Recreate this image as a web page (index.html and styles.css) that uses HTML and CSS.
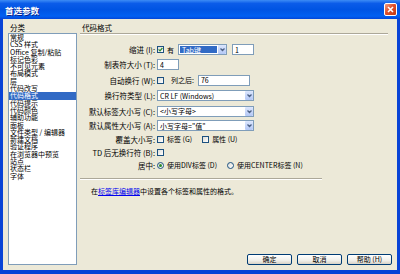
FILE: index.html
```html
<!DOCTYPE html>
<html lang="zh-CN">
<head>
  <meta charset="UTF-8">
  <meta name="viewport" content="width=device-width, initial-scale=1.0">
  <title>首选参数</title>
  <link rel="stylesheet" href="styles.css">
</head>
<body>
  <div class="window">
    <div class="titlebar">
      <span class="title">首选参数</span>
      <span class="close">
        <svg width="7" height="7" viewBox="0 0 7 7"><path d="M1 1 L6 6 M6 1 L1 6" stroke="#fff" stroke-width="1.6"/></svg>
      </span>
    </div>

    <div class="body">
      <div class="sidebar">
        <div class="caption">分类</div>
        <ul class="list">
          <li>常规</li>
          <li>CSS 样式</li>
          <li>Office 复制/粘贴</li>
          <li>标记色彩</li>
          <li>不可见元素</li>
          <li>布局模式</li>
          <li>层</li>
          <li>代码改写</li>
          <li class="selected">代码格式</li>
          <li>代码提示</li>
          <li>代码颜色</li>
          <li>辅助功能</li>
          <li>面板</li>
          <li>文件类型 / 编辑器</li>
          <li>新建文档</li>
          <li>验证程序</li>
          <li>在浏览器中预览</li>
          <li>站点</li>
          <li>状态栏</li>
          <li>字体</li>
        </ul>
      </div>

      <div class="main">
        <div class="heading">代码格式</div>

        <div class="form">
          <label class="label">缩进 (I):</label>
          <div class="controls">
            <span class="check on"><svg width="5" height="5" viewBox="0 0 5 5"><path d="M0.6 2.4 L2 3.8 L4.4 1" stroke="#2a8a2a" stroke-width="1.2" fill="none"/></svg></span>
            <span class="text">有</span>
            <span class="select w49 active"><span class="value">Tab键</span><span class="arrow"><svg width="7" height="7" viewBox="0 0 7 7"><path d="M1.5 2.5 L3.5 4.5 L5.5 2.5" stroke="#4d6185" stroke-width="1.3" fill="none"/></svg></span></span>
            <span class="input w22 gap-left">1</span>
          </div>

          <label class="label">制表符大小 (T):</label>
          <div class="controls">
            <span class="input w22">4</span>
          </div>

          <label class="label">自动换行 (W):</label>
          <div class="controls">
            <span class="check"></span>
            <span class="text pad-left">列之后:</span>
            <span class="input w52">76</span>
          </div>

          <label class="label">换行符类型 (L):</label>
          <div class="controls">
            <span class="select w97"><span class="value">CR LF (Windows)</span><span class="arrow"><svg width="7" height="7" viewBox="0 0 7 7"><path d="M1.5 2.5 L3.5 4.5 L5.5 2.5" stroke="#4d6185" stroke-width="1.3" fill="none"/></svg></span></span>
          </div>

          <label class="label">默认标签大小写 (C):</label>
          <div class="controls">
            <span class="select w97"><span class="value">&lt;小写字母&gt;</span><span class="arrow"><svg width="7" height="7" viewBox="0 0 7 7"><path d="M1.5 2.5 L3.5 4.5 L5.5 2.5" stroke="#4d6185" stroke-width="1.3" fill="none"/></svg></span></span>
          </div>

          <label class="label">默认属性大小写 (A):</label>
          <div class="controls">
            <span class="select w97"><span class="value">小写字母="值"</span><span class="arrow"><svg width="7" height="7" viewBox="0 0 7 7"><path d="M1.5 2.5 L3.5 4.5 L5.5 2.5" stroke="#4d6185" stroke-width="1.3" fill="none"/></svg></span></span>
          </div>

          <label class="label">覆盖大小写:</label>
          <div class="controls">
            <span class="check"></span>
            <span class="text opt">标签 (G)</span>
            <span class="check"></span>
            <span class="text">属性 (U)</span>
          </div>

          <label class="label">TD 后无换行符 (B):</label>
          <div class="controls">
            <span class="check"></span>
          </div>

          <label class="label">居中:</label>
          <div class="controls">
            <span class="radio on"></span>
            <span class="text opt">使用DIV标签 (D)</span>
            <span class="radio"></span>
            <span class="text">使用CENTER标签 (N)</span>
          </div>
        </div>

        <div class="rule"></div>

        <p class="note">在<a href="#">标签库编辑器</a>中设置各个标签和属性的格式。</p>

        <div class="buttons">
          <button>确定</button>
          <button>取消</button>
          <button>帮助 (H)</button>
        </div>
      </div>
    </div>
  </div>
</body>
</html>
```

FILE: styles.css
```css
body {
  margin: 0;
  padding: 0;
  font-family: "Noto Sans CJK SC", "Noto Sans", sans-serif;
  color: #000;
}

.window {
  width: 400px;
  height: 274px;
  display: flex;
  flex-direction: column;
  background: #0843d6;
  overflow: hidden;
}

.titlebar {
  height: 19px;
  display: flex;
  align-items: center;
  justify-content: space-between;
  padding: 0 3px 0 5px;
  background: linear-gradient(to bottom, #3d8cf5 0%, #0b5ce9 18%, #0054e3 50%, #0160f2 85%, #0346d8 100%);
}

.title {
  color: #fff;
  font-size: 8.5px;
  font-weight: bold;
  text-shadow: 1px 1px 0 #0a1f8a;
}

.close {
  width: 11px;
  height: 11px;
  display: flex;
  align-items: center;
  justify-content: center;
  border: 1px solid #fff;
  border-radius: 2px;
  background: linear-gradient(135deg, #f0a084 0%, #e0502c 45%, #c13a10 100%);
}

.body {
  flex: 1;
  display: flex;
  gap: 3px;
  margin: 0 3px 4px;
  padding: 3px 5px 5px;
  background: #ece9d8;
}

.sidebar {
  width: 69px;
  display: flex;
  flex-direction: column;
}

.caption {
  height: 11px;
  line-height: 11px;
  font-size: 7.5px;
  padding-left: 2px;
}

.list {
  flex: 1;
  margin: 0;
  padding: 0;
  list-style: none;
  background: #fff;
  border: 1px solid #7f9db9;
  font-size: 7px;
}

.list li {
  height: 7.3px;
  line-height: 7.3px;
  padding-left: 1px;
  white-space: nowrap;
}

.list li.selected {
  background: #316ac5;
  color: #fff;
}

.main {
  flex: 1;
  display: flex;
  flex-direction: column;
}

.heading {
  height: 11px;
  line-height: 11px;
  font-size: 7.5px;
  padding-left: 2px;
  margin-right: 4px;
  border-bottom: 1px solid #aca899;
  box-shadow: 0 1px 0 #fff;
}

.form {
  margin-top: 9px;
  display: grid;
  grid-template-columns: 75px auto;
  grid-template-rows: 13.5px 16px 15.5px 15px 16px 13.5px 13px 13.5px 12px;
  column-gap: 2px;
  align-items: center;
}

.label {
  text-align: right;
  font-size: 7.5px;
  white-space: nowrap;
}

.controls {
  display: flex;
  align-items: center;
  font-size: 7px;
}

.text {
  margin: 0 4px 0 3px;
  white-space: nowrap;
}

.text.pad-left {
  margin-left: 7px;
}

.text.opt {
  margin-right: 10px;
}

.check, .radio {
  width: 7px;
  height: 7px;
  box-sizing: border-box;
  border: 1px solid #1c5180;
  background: linear-gradient(135deg, #dcdcd7, #fff);
  display: flex;
  align-items: center;
  justify-content: center;
  flex-shrink: 0;
}

.radio {
  border-radius: 50%;
}

.radio.on::after {
  content: "";
  width: 3px;
  height: 3px;
  border-radius: 50%;
  background: #2a8a2a;
}

.input, .select {
  height: 11px;
  box-sizing: border-box;
  border: 1px solid #7f9db9;
  background: #fff;
  display: flex;
  align-items: center;
  white-space: nowrap;
}

.input {
  padding-left: 2px;
}

.gap-left {
  margin-left: 5px;
}

.w22 { width: 22px; }
.w49 { width: 49px; }
.w52 { width: 52px; }
.w97 { width: 97px; }

.select .value {
  flex: 1;
  height: 100%;
  display: flex;
  align-items: center;
  padding-left: 2px;
  overflow: hidden;
}

.select.active .value {
  background: #316ac5;
  color: #fff;
  margin: 1px;
  height: auto;
  align-self: stretch;
}

.arrow {
  width: 8px;
  height: 9px;
  display: flex;
  align-items: center;
  justify-content: center;
  border-radius: 1px;
  background: linear-gradient(to bottom, #dce6fd, #b4c8f6);
}

.rule {
  width: 242px;
  margin-top: 7px;
  border-top: 1px solid #aca899;
  border-bottom: 1px solid #fff;
}

.note {
  margin: 5px 0 0;
  padding-left: 11px;
  line-height: 12px;
  font-size: 7px;
}

.note a {
  color: #0000ee;
}

.buttons {
  margin-top: auto;
  display: flex;
  justify-content: flex-end;
  gap: 5px;
}

button {
  width: 45px;
  height: 11px;
  padding: 0;
  border: 1px solid #003c74;
  border-radius: 2px;
  background: linear-gradient(to bottom, #fff, #f0efea 60%, #d8d2c6);
  font-family: "Noto Sans CJK SC", sans-serif;
  font-size: 7px;
  line-height: 9px;
  color: #000;
}
```
